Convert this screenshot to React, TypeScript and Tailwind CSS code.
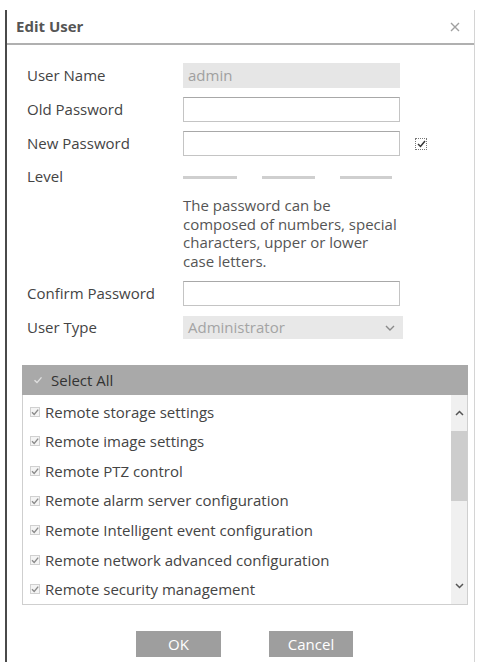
const items = [
  "Remote storage settings",
  "Remote image settings",
  "Remote PTZ control",
  "Remote alarm server configuration",
  "Remote Intelligent event configuration",
  "Remote network advanced configuration",
  "Remote security management",
];

function Check({ className = "" }: { className?: string }) {
  return (
    <svg width="10" height="10" viewBox="0 0 10 10" className={className}>
      <rect x="0.5" y="0.5" width="9" height="9" fill="#f4f4f4" stroke="#d0d0d0" />
      <path d="M2 5.2 L4.2 7.4 L8.2 2.6" fill="none" stroke="#8a8a8a" strokeWidth="1.4" />
    </svg>
  );
}

function Row({ label, children, className = "" }: { label: string; children: React.ReactNode; className?: string }) {
  return (
    <div className={`flex items-center ${className}`}>
      <div className="w-[156px] shrink-0 text-[15px] text-[#444]">{label}</div>
      {children}
    </div>
  );
}

export default function App() {
  return (
    <div
      className="w-[478px] h-[662px] bg-white pt-[10px] pl-[5px] overflow-hidden"
      style={{ fontFamily: '"Open Sans", "Liberation Sans", sans-serif' }}
    >
      <div className="w-[470px] h-[652px] border-l-2 border-l-[#4a4a4a] border-r border-r-[#d4d4d4]">
        <div className="h-[35px] flex items-center justify-between pl-[9px] pr-[14px] border-b-2 border-b-[#b0b0b0]">
          <span className="text-[15px] font-bold text-[#555]">Edit User</span>
          <svg width="10" height="10" viewBox="0 0 10 10">
            <path d="M1 1 L9 9 M9 1 L1 9" stroke="#a0a0a0" strokeWidth="1.4" />
          </svg>
        </div>

        <div className="pl-[20px]">
          <Row label="User Name" className="mt-[18px] h-[25px]">
            <div className="w-[217px] h-[25px] bg-[#e6e6e6] flex items-center px-[5px] text-[15px] text-[#a0a0a0]">
              admin
            </div>
          </Row>
          <Row label="Old Password" className="mt-[9px] h-[25px]">
            <div className="w-[217px] h-[25px] border border-[#c4c4c4] border-t-[#a8a8a8] bg-white" />
          </Row>
          <Row label="New Password" className="mt-[9px] h-[25px]">
            <div className="w-[217px] h-[25px] border border-[#c4c4c4] border-t-[#a8a8a8] bg-white" />
            <div className="ml-[15px] w-[12px] h-[12px] border border-dotted border-[#777] flex items-center justify-center">
              <svg width="9" height="8" viewBox="0 0 9 8">
                <path d="M1 4 L3.5 6.5 L8 1" fill="none" stroke="#333" strokeWidth="1.5" />
              </svg>
            </div>
          </Row>
          <Row label="Level" className="mt-[12px] h-[16px]">
            <div className="flex gap-[25px] pt-[3px]">
              <div className="w-[54px] h-[3px] bg-[#cfcfcf]" />
              <div className="w-[53px] h-[3px] bg-[#cfcfcf]" />
              <div className="w-[52px] h-[3px] bg-[#cfcfcf]" />
            </div>
          </Row>
          <div className="ml-[156px] mt-[12px] w-[218px] text-[15px] leading-[18.5px] text-[#555]">
            The password can be composed of numbers, special characters, upper or lower case letters.
          </div>
          <Row label="Confirm Password" className="mt-[11px] h-[25px]">
            <div className="w-[217px] h-[25px] border border-[#c4c4c4] border-t-[#a8a8a8] bg-white" />
          </Row>
          <Row label="User Type" className="mt-[10px] h-[23px]">
            <div className="w-[220px] h-[23px] bg-[#e8e8e8] flex items-center justify-between pl-[5px] pr-[8px] text-[15px] text-[#a4a4a4]">
              <span>Administrator</span>
              <svg width="10" height="6" viewBox="0 0 10 6">
                <path d="M1 1 L5 5 L9 1" fill="none" stroke="#8a8a8a" strokeWidth="1.4" />
              </svg>
            </div>
          </Row>
        </div>

        <div className="ml-[15px] w-[446px] mt-[26px]">
          <div className="h-[30px] bg-[#a9a9a9] flex items-center pl-[11px] gap-[8px] text-[15px] text-[#333]">
            <svg width="10" height="10" viewBox="0 0 10 10">
              <path d="M1.5 5.2 L4 7.6 L8.5 2.4" fill="none" stroke="#e0e0e0" strokeWidth="1.4" />
            </svg>
            <span>Select All</span>
          </div>
          <div className="h-[210px] border border-t-0 border-[#cfcfcf] flex">
            <div className="flex-1 pt-[2px]">
              {items.map((t) => (
                <div key={t} className="h-[29.6px] flex items-center pl-[7px] gap-[5px] text-[15px] text-[#444]">
                  <Check />
                  <span>{t}</span>
                </div>
              ))}
            </div>
            <div className="w-[16px] bg-[#f0f0f0] flex flex-col items-center">
              <div className="h-[36px] flex items-center justify-center">
                <svg width="9" height="6" viewBox="0 0 9 6">
                  <path d="M1 5 L4.5 1.5 L8 5" fill="none" stroke="#555" strokeWidth="1.5" />
                </svg>
              </div>
              <div className="w-[16px] h-[70px] bg-[#cdcdcd]" />
              <div className="flex-1" />
              <div className="h-[36px] flex items-center justify-center">
                <svg width="9" height="6" viewBox="0 0 9 6">
                  <path d="M1 1 L4.5 4.5 L8 1" fill="none" stroke="#555" strokeWidth="1.5" />
                </svg>
              </div>
            </div>
          </div>
        </div>

        <div className="mt-[26px] flex justify-center gap-[48px] pl-[8px]">
          <div className="w-[85px] h-[26px] bg-[#9e9e9e] flex items-center justify-center text-[15px] text-white">OK</div>
          <div className="w-[84px] h-[26px] bg-[#9e9e9e] flex items-center justify-center text-[15px] text-white">Cancel</div>
        </div>
      </div>
    </div>
  );
}
